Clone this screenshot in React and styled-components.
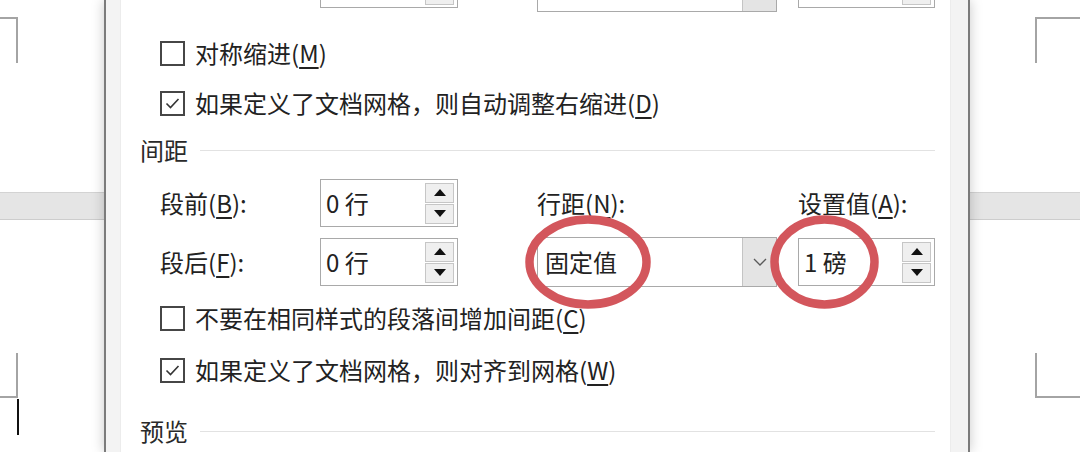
import React from "react";
import styled, { createGlobalStyle } from "styled-components";

const GlobalStyle = createGlobalStyle`
  html, body {
    margin: 0;
    padding: 0;
    background: #ffffff;
  }
  body {
    width: 1080px;
    height: 452px;
    overflow: hidden;
    font-family: "Noto Sans CJK SC", "Noto Sans", sans-serif;
    color: #222;
  }
`;

const Screen = styled.div`
  display: grid;
  grid-template-columns: 104px 866px 110px;
  height: 452px;
  overflow: hidden;
`;

// Word document pages peeking out on both sides of the dialog
const PageSide = styled.div`
  display: flex;
  flex-direction: column;
`;

const Page = styled.div`
  display: flex;
  flex-direction: column;
  height: ${(p) => p.$height}px;
  background: #fff;
`;

const PageGap = styled.div`
  height: 26px;
  background: #e5e5e5;
  border-top: 1px solid #d3d3d3;
  border-bottom: 1px solid #cdcdcd;
`;

const CornerMark = styled.div`
  box-sizing: border-box;
  height: ${(p) => p.$h}px;
  width: ${(p) => (p.$w ? `${p.$w}px` : "auto")};
  margin-top: ${(p) => p.$top}px;
  margin-left: ${(p) => p.$left || 0}px;
  border: 0 solid #a4a4a4;
  ${(p) => p.$edges.includes("t") && "border-top-width: 2px;"}
  ${(p) => p.$edges.includes("r") && "border-right-width: 2px;"}
  ${(p) => p.$edges.includes("b") && "border-bottom-width: 2px;"}
  ${(p) => p.$edges.includes("l") && "border-left-width: 2px;"}
`;

const Caret = styled.div`
  width: 2px;
  height: 36px;
  margin: 1px 0 0 17px;
  background: #111;
`;

const Dialog = styled.div`
  position: relative;
  z-index: 1;
  display: flex;
  background: #f3f3f3;
  border-left: 2px solid #7b7b7b;
  border-right: 2px solid #7b7b7b;
  box-shadow: 0 0 12px rgba(0, 0, 0, 0.22);
  padding: 0 17px 0 14px;
`;

const Content = styled.div`
  flex: 1;
  display: flex;
  flex-direction: column;
  background: #fff;
  border-left: 1px solid #ececec;
  border-right: 1px solid #ececec;
  padding-left: 19px;
  overflow: hidden;
`;

const FieldGrid = styled.div`
  display: grid;
  grid-template-columns: 160px 217px 261px 137px;
  grid-template-rows: ${(p) => p.$rows};
  row-gap: 10px;
  align-items: center;
  margin: ${(p) => p.$top}px 0 0 20px;
`;

const Cell = styled.div`
  position: relative;
  grid-column: ${(p) => p.$col};
  align-self: ${(p) => p.$align || "center"};
  margin-bottom: ${(p) => p.$bottom || 0}px;
  display: flex;
`;

const Label = styled.span`
  font-size: 24px;
  line-height: 1;
  white-space: nowrap;
`;

const Key = styled.u`
  text-decoration-thickness: 1.5px;
  text-underline-offset: 4px;
`;

const SpinBox = styled.div`
  box-sizing: border-box;
  display: flex;
  align-items: center;
  width: ${(p) => p.$w}px;
  height: 48px;
  padding-left: 5px;
  background: #fff;
  border: 1px solid #a9a9a9;
  font-size: 24px;
  line-height: 1;
`;

const Spinner = styled.div`
  display: flex;
  flex-direction: column;
  gap: 1px;
  margin-left: auto;
  margin-right: 3px;
`;

const SpinButton = styled.div`
  box-sizing: border-box;
  width: 29px;
  height: 20px;
  display: flex;
  align-items: center;
  justify-content: center;
  background: #efefef;
  border: 1px solid #c6c6c6;
`;

const Combo = styled.div`
  box-sizing: border-box;
  display: flex;
  align-items: center;
  width: 240px;
  height: 50px;
  padding-left: 7px;
  background: #fff;
  border: 1px solid #a9a9a9;
  font-size: 24px;
  line-height: 1;
`;

const ComboButton = styled.div`
  align-self: stretch;
  width: 33px;
  margin-left: auto;
  display: flex;
  align-items: center;
  justify-content: center;
  background: #e4e4e4;
  border-left: 1px solid #c4c4c4;
`;

const CheckRow = styled.label`
  display: flex;
  align-items: center;
  gap: 10px;
  height: 26px;
  margin: ${(p) => p.$top}px 0 0 20px;
  font-size: 24px;
  line-height: 1;
  white-space: nowrap;
`;

const Box = styled.span`
  box-sizing: border-box;
  width: 25px;
  height: 25px;
  flex: none;
  display: flex;
  align-items: center;
  justify-content: center;
  border: 2px solid #464646;
  background: #fff;
`;

const SectionHeader = styled.div`
  display: flex;
  align-items: center;
  gap: 12px;
  height: 30px;
  margin-top: ${(p) => p.$top}px;
  margin-right: 15px;
  font-size: 24px;
  line-height: 1;
  color: #2a2a2a;

  &::after {
    content: "";
    flex: 1;
    height: 1px;
    background: #e2e2e2;
  }
`;

const Ring = styled.svg`
  position: absolute;
  left: ${(p) => p.$left}px;
  top: ${(p) => p.$top}px;
  pointer-events: none;
  z-index: 2;
`;

function Arrow({ down }) {
  return (
    <svg width="12" height="7" viewBox="0 0 12 7">
      <polygon points={down ? "0,0 12,0 6,7" : "0,7 12,7 6,0"} fill="#111" />
    </svg>
  );
}

function Spin({ value, w = 138 }) {
  return (
    <SpinBox $w={w}>
      {value}
      <Spinner>
        <SpinButton>
          <Arrow />
        </SpinButton>
        <SpinButton>
          <Arrow down />
        </SpinButton>
      </Spinner>
    </SpinBox>
  );
}

function Dropdown({ value }) {
  return (
    <Combo>
      {value}
      <ComboButton>
        <svg width="14" height="8" viewBox="0 0 14 8">
          <polyline points="1,1 7,7 13,1" fill="none" stroke="#5a5a5a" strokeWidth="1.3" />
        </svg>
      </ComboButton>
    </Combo>
  );
}

function RedRing({ left, top, w, h }) {
  return (
    <Ring $left={left} $top={top} width={w} height={h} viewBox={`0 0 ${w} ${h}`}>
      <ellipse
        cx={w / 2}
        cy={h / 2}
        rx={w / 2 - 4.5}
        ry={h / 2 - 4.5}
        fill="none"
        stroke="#d3565c"
        strokeWidth="8.5"
      />
    </Ring>
  );
}

function Check({ checked, children, top }) {
  return (
    <CheckRow $top={top}>
      <Box>
        {checked && (
          <svg width="19" height="19" viewBox="0 0 19 19">
            <polyline points="3.5,9.5 7.5,13.5 15.5,5" fill="none" stroke="#333" strokeWidth="1.6" />
          </svg>
        )}
      </Box>
      <span>{children}</span>
    </CheckRow>
  );
}

export default function App() {
  return (
    <>
      <GlobalStyle />
      <Screen>
        <PageSide>
          <Page $height={192}>
            <CornerMark $edges="tr" $w={18} $h={46} $top={17} />
          </Page>
          <PageGap />
          <Page $height={232}>
            <CornerMark $edges="rb" $w={18} $h={45} $top={133} />
            <Caret />
          </Page>
        </PageSide>

        <Dialog>
          <Content>
            <FieldGrid $top={-38} $rows="50px">
              <Cell $col={2} $align="end" $bottom={4}>
                <Spin value="" />
              </Cell>
              <Cell $col={3} $align="end">
                <Dropdown value="" />
              </Cell>
              <Cell $col={4} $align="end" $bottom={4}>
                <Spin value="" w={137} />
              </Cell>
            </FieldGrid>

            <Check top={28}>
              对称缩进(<Key>M</Key>)
            </Check>
            <Check checked top={24}>
              如果定义了文档网格，则自动调整右缩进(<Key>D</Key>)
            </Check>

            <SectionHeader $top={19}>间距</SectionHeader>

            <FieldGrid $top={14} $rows="48px 50px">
              <Cell $col={1}>
                <Label>
                  段前(<Key>B</Key>):
                </Label>
              </Cell>
              <Cell $col={2}>
                <Spin value="0 行" />
              </Cell>
              <Cell $col={3}>
                <Label>
                  行距(<Key>N</Key>):
                </Label>
              </Cell>
              <Cell $col={4}>
                <Label>
                  设置值(<Key>A</Key>):
                </Label>
              </Cell>

              <Cell $col={1}>
                <Label>
                  段后(<Key>F</Key>):
                </Label>
              </Cell>
              <Cell $col={2}>
                <Spin value="0 行" />
              </Cell>
              <Cell $col={3}>
                <Dropdown value="固定值" />
                <RedRing left={-12} top={-22} w={126} h={94} />
              </Cell>
              <Cell $col={4}>
                <Spin value="1 磅" w={137} />
                <RedRing left={-28} top={-23} w={109} h={94} />
              </Cell>
            </FieldGrid>

            <Check top={18}>
              不要在相同样式的段落间增加间距(<Key>C</Key>)
            </Check>
            <Check checked top={26}>
              如果定义了文档网格，则对齐到网格(<Key>W</Key>)
            </Check>

            <SectionHeader $top={33}>预览</SectionHeader>
          </Content>
        </Dialog>

        <PageSide>
          <Page $height={192}>
            <CornerMark $edges="tl" $h={46} $top={17} $left={65} />
          </Page>
          <PageGap />
          <Page $height={232}>
            <CornerMark $edges="lb" $h={45} $top={133} $left={65} />
          </Page>
        </PageSide>
      </Screen>
    </>
  );
}
